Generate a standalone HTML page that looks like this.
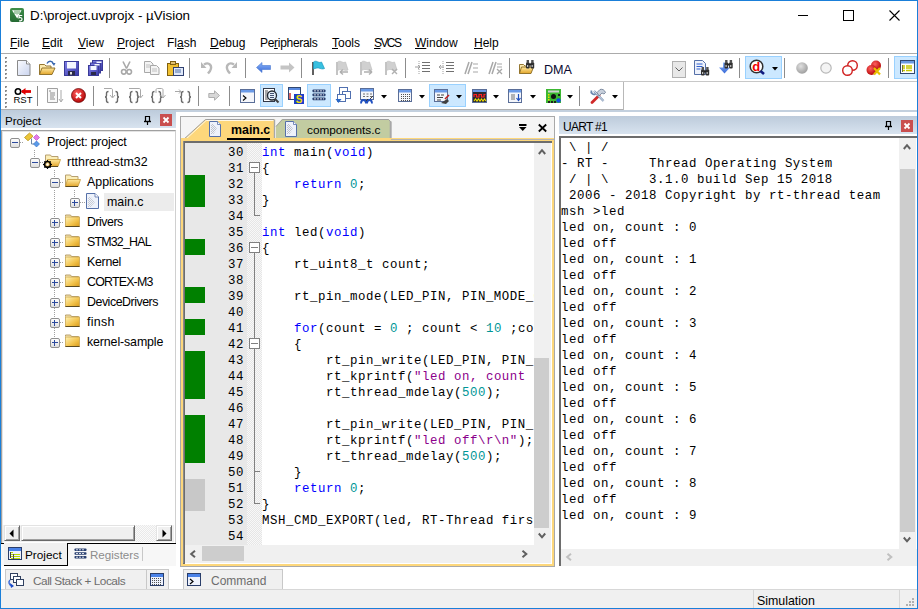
<!DOCTYPE html><html><head><meta charset="utf-8"><style>
*{margin:0;padding:0;box-sizing:border-box}
html,body{width:918px;height:609px;overflow:hidden;background:#fff;font-family:"Liberation Sans",sans-serif;font-size:12px;color:#000}
.ab{position:absolute}
.t{position:absolute;white-space:pre;line-height:14px}
.m{font-family:"Liberation Mono",monospace;font-size:12.4px;letter-spacing:0.56px;line-height:16px;white-space:pre;position:absolute}
.k{color:#0000ff}.n{color:#009696}.s{color:#8b008b}
.u{text-decoration:underline}
svg{position:absolute;overflow:visible}
</style></head><body>
<svg style="left:10px;top:8px" width="14" height="14" viewBox="0 0 14 14"><defs><linearGradient id="lg5" x1="0" y1="0" x2="0" y2="1"><stop offset="0" stop-color="#3f8f4a"/><stop offset="1" stop-color="#256a33"/></linearGradient></defs><rect x="0" y="0" width="14" height="14" rx="2" fill="url(#lg5)"/><path d="M2 2.2h9.5L7.2 10.5z" fill="#fff"/><path d="M5 2.5v3.5M7 2.5v4M9 2.5v3.5" stroke="#3a8a46" stroke-width="0.9"/><path d="M9 7.5h3.2M9.3 7.5l-0.3 2.3c1.5-0.5 3 0 3 1.4 0 1.3-1.3 2-2.9 1.5" fill="none" stroke="#fff" stroke-width="1.2"/></svg>
<div class="t" style="left:30px;top:9px;font-size:13.4px">D:\project.uvprojx - µVision</div>
<div class="t" style="left:10px;top:36px;letter-spacing:0"><span class="u">F</span>ile</div>
<div class="t" style="left:42px;top:36px;letter-spacing:0"><span class="u">E</span>dit</div>
<div class="t" style="left:78px;top:36px;letter-spacing:0"><span class="u">V</span>iew</div>
<div class="t" style="left:117px;top:36px;letter-spacing:0"><span class="u">P</span>roject</div>
<div class="t" style="left:167px;top:36px;letter-spacing:0">Fl<span class="u">a</span>sh</div>
<div class="t" style="left:210px;top:36px;letter-spacing:0"><span class="u">D</span>ebug</div>
<div class="t" style="left:260px;top:36px;letter-spacing:-0.3px">Pe<span class="u">r</span>ipherals</div>
<div class="t" style="left:332px;top:36px;letter-spacing:0"><span class="u">T</span>ools</div>
<div class="t" style="left:374px;top:36px;letter-spacing:-1.6px"><span class="u">S</span>VCS</div>
<div class="t" style="left:415px;top:36px;letter-spacing:0"><span class="u">W</span>indow</div>
<div class="t" style="left:474px;top:36px;letter-spacing:0"><span class="u">H</span>elp</div>
<div class="ab" style="left:798px;top:15px;width:10px;height:1px;background:#000"></div>
<div class="ab" style="left:843px;top:10px;width:11px;height:11px;border:1px solid #000"></div>
<svg style="left:889px;top:10px" width="11" height="11" viewBox="0 0 11 11"><path d="M0.5 0.5L10.5 10.5M10.5 0.5L0.5 10.5" stroke="#000" stroke-width="1.1"/></svg>
<div class="ab" style="left:1px;top:53px;width:916px;height:1px;background:#ababab"></div>
<div class="ab" style="left:1px;top:81px;width:916px;height:1px;background:#c8c8c8"></div>
<div class="ab" style="left:1px;top:109px;width:623px;height:1px;background:#b0b0b0"></div>
<div class="ab" style="left:5px;top:57px;width:2px;height:2px;background:#c4c4c4;box-shadow:inset 1px 1px 0 #8a8a8a"></div>
<div class="ab" style="left:5px;top:61px;width:2px;height:2px;background:#c4c4c4;box-shadow:inset 1px 1px 0 #8a8a8a"></div>
<div class="ab" style="left:5px;top:65px;width:2px;height:2px;background:#c4c4c4;box-shadow:inset 1px 1px 0 #8a8a8a"></div>
<div class="ab" style="left:5px;top:69px;width:2px;height:2px;background:#c4c4c4;box-shadow:inset 1px 1px 0 #8a8a8a"></div>
<div class="ab" style="left:5px;top:73px;width:2px;height:2px;background:#c4c4c4;box-shadow:inset 1px 1px 0 #8a8a8a"></div>
<div class="ab" style="left:5px;top:77px;width:2px;height:2px;background:#c4c4c4;box-shadow:inset 1px 1px 0 #8a8a8a"></div>
<div class="ab" style="left:5px;top:86px;width:2px;height:2px;background:#c4c4c4;box-shadow:inset 1px 1px 0 #8a8a8a"></div>
<div class="ab" style="left:5px;top:90px;width:2px;height:2px;background:#c4c4c4;box-shadow:inset 1px 1px 0 #8a8a8a"></div>
<div class="ab" style="left:5px;top:94px;width:2px;height:2px;background:#c4c4c4;box-shadow:inset 1px 1px 0 #8a8a8a"></div>
<div class="ab" style="left:5px;top:98px;width:2px;height:2px;background:#c4c4c4;box-shadow:inset 1px 1px 0 #8a8a8a"></div>
<div class="ab" style="left:5px;top:102px;width:2px;height:2px;background:#c4c4c4;box-shadow:inset 1px 1px 0 #8a8a8a"></div>
<div class="ab" style="left:5px;top:106px;width:2px;height:2px;background:#c4c4c4;box-shadow:inset 1px 1px 0 #8a8a8a"></div>
<svg width="0" height="0" style="position:absolute"><defs><linearGradient id="pg" x1="0" y1="0" x2="1" y2="1"><stop offset="0" stop-color="#fbfcff"/><stop offset="1" stop-color="#c9d3ee"/></linearGradient><linearGradient id="bl" x1="0" y1="0" x2="0" y2="1"><stop offset="0" stop-color="#8ab4f8"/><stop offset="1" stop-color="#3a6ad8"/></linearGradient><radialGradient id="rc" cx="0.4" cy="0.35" r="0.7"><stop offset="0" stop-color="#ff6060"/><stop offset="1" stop-color="#b00000"/></radialGradient><radialGradient id="gc" cx="0.4" cy="0.35" r="0.7"><stop offset="0" stop-color="#e0e0e0"/><stop offset="1" stop-color="#9a9a9a"/></radialGradient></defs></svg>
<svg style="left:17px;top:60px" width="14" height="16" viewBox="0 0 14 16"><path d="M0.5 0.5h9l3.5 3.5v11.5h-12.5z" fill="url(#pg)" stroke="#8a8a8a"/><path d="M9.5 0.5v3.5h3.5" fill="#fff" stroke="#8a8a8a"/></svg>
<svg style="left:39px;top:60px" width="17" height="16" viewBox="0 0 17 16"><path d="M0.5 14.5V4.5h5l1.5 1.5h5v2" fill="#fbeab0" stroke="#8a6a20" stroke-width="0.9"/><path d="M3 8h13l-3 6.5H0.5z" fill="url(#fg2)" stroke="#8a6a20" stroke-width="0.9"/><path d="M8 3.5c1.5-3 5-3 6.5 0.5" fill="none" stroke="#3a68b0" stroke-width="1.4"/><path d="M13 3h3.5l-1.5 3z" fill="#3a68b0"/></svg>
<svg width="0" height="0" style="position:absolute"><defs><linearGradient id="sv" x1="0" y1="0" x2="1" y2="1"><stop offset="0" stop-color="#8080e8"/><stop offset="1" stop-color="#3a3aa8"/></linearGradient></defs></svg>
<svg style="left:64px;top:61px" width="15" height="15" viewBox="0 0 15 15"><rect x="0.5" y="0.5" width="14" height="14" fill="url(#sv)" stroke="#3a3a98"/><rect x="3" y="1" width="9" height="6.5" fill="#f4f6ff"/><rect x="4" y="10" width="7" height="4.5" fill="#2a2a4a"/><rect x="6" y="11" width="2" height="2.5" fill="#e0e0e0"/></svg>
<svg style="left:88px;top:60px" width="15" height="16" viewBox="0 0 15 16"><rect x="4.5" y="0.5" width="10" height="10" fill="url(#sv)" stroke="#3a3a98"/><rect x="2.5" y="3" width="10" height="10" fill="url(#sv)" stroke="#3a3a98"/><rect x="0.5" y="5.5" width="10" height="10" fill="url(#sv)" stroke="#3a3a98"/><rect x="2.5" y="6" width="6" height="4" fill="#f4f6ff"/><rect x="3" y="12" width="5" height="3" fill="#2a2a4a"/><rect x="6.5" y="4" width="5" height="1.5" fill="#f4f6ff"/><rect x="8.5" y="1.5" width="5" height="1.5" fill="#f4f6ff"/></svg>
<div class="ab" style="left:109px;top:58px;width:1px;height:20px;background:#8c8c8c"></div>
<svg style="left:121px;top:61px" width="11" height="14" viewBox="0 0 11 14"><path d="M2 0.5l3.5 7M9 0.5l-3.5 7" stroke="#a8a8a8" stroke-width="1.6"/><circle cx="2.8" cy="10.8" r="2.3" fill="none" stroke="#a8a8a8" stroke-width="1.6"/><circle cx="8.2" cy="10.8" r="2.3" fill="none" stroke="#a8a8a8" stroke-width="1.6"/></svg>
<svg style="left:144px;top:61px" width="16" height="14" viewBox="0 0 16 14"><path d="M0.5 0.5h6l2.5 2.5v8.5h-8.5z" fill="#f4f4f4" stroke="#a8a8a8"/><path d="M6.5 4.5h6l2.5 2.5v6.5h-8.5z" fill="#f4f4f4" stroke="#a8a8a8"/><path d="M2 4h4M2 6h4M8 8h5M8 10h5" stroke="#c0c0c0"/></svg>
<svg style="left:167px;top:61px" width="17" height="15" viewBox="0 0 17 15"><rect x="0.5" y="2.5" width="11" height="12" fill="#f0c030" stroke="#806010"/><rect x="3.5" y="0.5" width="5" height="3" fill="#e0c070" stroke="#806010"/><rect x="6.5" y="6.5" width="10" height="8" fill="#dfe8f8" stroke="#304070"/><path d="M8 9h6M8 11h6" stroke="#5070a8"/></svg>
<div class="ab" style="left:189px;top:58px;width:1px;height:20px;background:#8c8c8c"></div>
<svg style="left:201px;top:61px" width="12" height="13" viewBox="0 0 12 13"><path d="M3 3.5c5-3 9 1 6 6.5l-2 2.5" fill="none" stroke="#b8b8b8" stroke-width="2.4"/><path d="M0 1v6h5.5z" fill="#b8b8b8"/></svg>
<svg style="left:225px;top:61px" width="12" height="13" viewBox="0 0 12 13"><path d="M9 3.5c-5-3-9 1-6 6.5l2 2.5" fill="none" stroke="#b8b8b8" stroke-width="2.4"/><path d="M12 1v6h-5.5z" fill="#b8b8b8"/></svg>
<div class="ab" style="left:245px;top:58px;width:1px;height:20px;background:#8c8c8c"></div>
<svg style="left:256px;top:62px" width="15" height="11" viewBox="0 0 15 11"><path d="M0.5 5.5L6 0.5v3h8.5v4H6v3z" fill="url(#bl)" stroke="#4a78d0" stroke-width="0.6"/></svg>
<svg style="left:280px;top:62px" width="15" height="11" viewBox="0 0 15 11"><path d="M14.5 5.5L9 0.5v3H0.5v4H9v3z" fill="#c4c4c4"/></svg>
<div class="ab" style="left:301px;top:58px;width:1px;height:20px;background:#8c8c8c"></div>
<svg style="left:311px;top:60px" width="15" height="16" viewBox="0 0 15 16"><path d="M2 2v13" stroke="#606060" stroke-width="2"/><path d="M2.5 2c2.5-2 4.5 0.5 6.5 0.5l1.5-0.5 3 6.5c-2 1-4 0-6-0.5-1.5-0.3-3.5 0.5-5 1z" fill="#38c0e0" stroke="#1898c0" stroke-width="0.7"/></svg>
<svg style="left:335px;top:60px" width="15" height="16" viewBox="0 0 15 16"><path d="M2 2v13" stroke="#c4c4c4" stroke-width="2"/><path d="M2.5 2c2.5-2 4.5 0.5 6.5 0.5l1.5-0.5 2.5 8c-2 1-4 0-6-0.5-1.5-0.3-3.5 0.5-4.5 1z" fill="#d0d0d0" stroke="#c0c0c0" stroke-width="0.7"/><path d="M5 12h8M5 12l3-2.5M5 12l3 2.5" stroke="#b0b0b0" stroke-width="1.5" fill="none"/></svg>
<svg style="left:359px;top:60px" width="15" height="16" viewBox="0 0 15 16"><path d="M2 2v13" stroke="#c4c4c4" stroke-width="2"/><path d="M2.5 2c2.5-2 4.5 0.5 6.5 0.5l1.5-0.5 2.5 8c-2 1-4 0-6-0.5-1.5-0.3-3.5 0.5-4.5 1z" fill="#d0d0d0" stroke="#c0c0c0" stroke-width="0.7"/><path d="M5 12h8M13 12l-3-2.5M13 12l-3 2.5" stroke="#b0b0b0" stroke-width="1.5" fill="none"/></svg>
<svg style="left:384px;top:60px" width="15" height="16" viewBox="0 0 15 16"><path d="M2 2v13" stroke="#c4c4c4" stroke-width="2"/><path d="M2.5 2c2.5-2 4.5 0.5 6.5 0.5l1.5-0.5 2.5 8c-2 1-4 0-6-0.5-1.5-0.3-3.5 0.5-4.5 1z" fill="#d0d0d0" stroke="#c0c0c0" stroke-width="0.7"/><path d="M8 9l5 5M13 9l-5 5" stroke="#b0b0b0" stroke-width="1.4"/></svg>
<div class="ab" style="left:405px;top:58px;width:1px;height:20px;background:#8c8c8c"></div>
<svg style="left:415px;top:60px" width="16" height="15" viewBox="0 0 16 15"><path d="M7 2.5h8M7 5.5h8M7 8.5h8M7 11.5h8" stroke="#707070" stroke-width="1.2"/><path d="M4 1v13" stroke="#a0a0a0" stroke-dasharray="1 1"/><path d="M0 7h5M3 5l2 2-2 2" stroke="#a0a0a0" fill="none"/></svg>
<svg style="left:439px;top:60px" width="16" height="15" viewBox="0 0 16 15"><path d="M7 2.5h8M7 5.5h8M7 8.5h8M7 11.5h8" stroke="#707070" stroke-width="1.2"/><path d="M4 1v13" stroke="#a0a0a0" stroke-dasharray="1 1"/><path d="M0 7h5M2 5L0 7l2 2" stroke="#a0a0a0" fill="none"/></svg>
<svg style="left:464px;top:61px" width="15" height="14" viewBox="0 0 15 14"><path d="M1 13L5 1M4 13L8 1" stroke="#a8a8a8" stroke-width="1.5"/><path d="M9 3h5M9 7h5M9 11h5" stroke="#a8a8a8" stroke-width="1.2"/></svg>
<svg style="left:488px;top:61px" width="15" height="14" viewBox="0 0 15 14"><path d="M1 13L5 1M4 13L8 1" stroke="#a8a8a8" stroke-width="1.5"/><path d="M9 3h5M9 6h5" stroke="#a8a8a8" stroke-width="1.2"/><path d="M9 8l5 5M14 8l-5 5" stroke="#a8a8a8" stroke-width="1.3"/></svg>
<div class="ab" style="left:509px;top:58px;width:1px;height:20px;background:#8c8c8c"></div>
<svg style="left:519px;top:60px" width="16" height="15" viewBox="0 0 16 15"><path d="M0.5 13.5V4.5h4l1.5 1.5h4" fill="#fbeab0" stroke="#8a6a20" stroke-width="0.9"/><path d="M2.5 7h12l-2.5 6.5H0.5z" fill="url(#fg2)" stroke="#8a6a20" stroke-width="0.9"/><g transform="translate(7,0)"><rect x="0" y="2.5" width="3.6" height="6" rx="1" fill="#303030"/><rect x="4.6" y="2.5" width="3.6" height="6" rx="1" fill="#303030"/><rect x="0.6" y="0" width="2.4" height="3" fill="#505050"/><rect x="5.2" y="0" width="2.4" height="3" fill="#505050"/><rect x="3" y="3.5" width="2.2" height="2" fill="#202020"/><rect x="1" y="5" width="1.2" height="2" fill="#c0c0c0"/><rect x="5.6" y="5" width="1.2" height="2" fill="#c0c0c0"/></g></svg>
<div class="t" style="left:544px;top:63px;font-size:12.6px;color:#0a0a30">DMA</div>
<div class="ab" style="left:672px;top:61px;width:14px;height:17px;background:#e8e8e8;border:1px solid #b0b0b0"></div>
<svg style="left:675px;top:67px" width="8" height="5" viewBox="0 0 8 5"><path d="M0.5 0.5l3.5 3.5 3.5-3.5" fill="none" stroke="#606060"/></svg>
<svg style="left:694px;top:60px" width="15" height="16" viewBox="0 0 15 16"><path d="M0.5 0.5h8l3 3v11h-11z" fill="#eef2fb" stroke="#5570a8"/><path d="M2.5 4h6M2.5 6.5h6M2.5 9h4" stroke="#3060d0" stroke-width="1.1"/><g transform="translate(7,7)"><rect x="0" y="2.5" width="3.6" height="6" rx="1" fill="#303030"/><rect x="4.6" y="2.5" width="3.6" height="6" rx="1" fill="#303030"/><rect x="0.6" y="0" width="2.4" height="3" fill="#505050"/><rect x="5.2" y="0" width="2.4" height="3" fill="#505050"/><rect x="3" y="3.5" width="2.2" height="2" fill="#202020"/><rect x="1" y="5" width="1.2" height="2" fill="#c0c0c0"/><rect x="5.6" y="5" width="1.2" height="2" fill="#c0c0c0"/></g></svg>
<svg style="left:717px;top:60px" width="16" height="16" viewBox="0 0 16 16"><path d="M2 7.5h4v-5h3v5h4l-5.5 6z" fill="url(#bl)"/><g transform="translate(7.5,0)"><rect x="0" y="2.5" width="3.6" height="6" rx="1" fill="#303030"/><rect x="4.6" y="2.5" width="3.6" height="6" rx="1" fill="#303030"/><rect x="0.6" y="0" width="2.4" height="3" fill="#505050"/><rect x="5.2" y="0" width="2.4" height="3" fill="#505050"/><rect x="3" y="3.5" width="2.2" height="2" fill="#202020"/><rect x="1" y="5" width="1.2" height="2" fill="#c0c0c0"/><rect x="5.6" y="5" width="1.2" height="2" fill="#c0c0c0"/></g></svg>
<div class="ab" style="left:739px;top:58px;width:1px;height:20px;background:#8c8c8c"></div>
<div class="ab" style="left:745px;top:56px;width:37px;height:23px;background:#cce8ff;border:1px solid #99d1ff"></div>
<svg style="left:749px;top:59px" width="19" height="18" viewBox="0 0 19 18"><circle cx="7.5" cy="7.5" r="6.3" fill="#fff" stroke="#303030" stroke-width="1.5"/><path d="M11.5 12l3.5 3" stroke="#101a80" stroke-width="2.6"/><text x="7.3" y="12" text-anchor="middle" font-family="Liberation Sans" font-weight="bold" font-size="13" fill="#f00000">d</text></svg>
<svg style="left:772px;top:67px" width="6" height="4" viewBox="0 0 6 4"><path d="M0 0h6l-3 3.5z" fill="#000"/></svg>
<div class="ab" style="left:784px;top:58px;width:1px;height:20px;background:#8c8c8c"></div>
<svg style="left:796px;top:62px" width="12" height="12" viewBox="0 0 12 12"><circle cx="6" cy="6" r="5.8" fill="url(#gc)"/></svg>
<svg style="left:820px;top:62px" width="12" height="12" viewBox="0 0 12 12"><circle cx="6" cy="6" r="5.2" fill="#f4f4f4" stroke="#b8b8b8" stroke-width="1.2"/></svg>
<svg style="left:842px;top:60px" width="16" height="16" viewBox="0 0 16 16"><circle cx="10.5" cy="5.5" r="4.8" fill="#fff" stroke="#d02020" stroke-width="1.4"/><circle cx="5.5" cy="10.5" r="4.8" fill="#fff" stroke="#d02020" stroke-width="1.4"/></svg>
<svg style="left:866px;top:60px" width="16" height="16" viewBox="0 0 16 16"><circle cx="10" cy="5.5" r="5" fill="url(#rc)"/><circle cx="5.5" cy="10" r="5" fill="url(#rc)"/><path d="M8 8l6 6.5M14 8l-6 6.5" stroke="#e8c000" stroke-width="2.2"/></svg>
<div class="ab" style="left:888px;top:58px;width:1px;height:20px;background:#8c8c8c"></div>
<div class="ab" style="left:894px;top:56px;width:23px;height:23px;background:#cce8ff;border:1px solid #99d1ff"></div>
<svg style="left:900px;top:60px" width="15" height="14" viewBox="0 0 15 14"><rect x="0.5" y="0.5" width="14" height="13" fill="#fff" stroke="#304870"/><rect x="1" y="1" width="13" height="2.5" fill="#6a9ae0"/><path d="M3 6h2M3 8h2M3 10.5h2M6 6h6M6 8h6M6 10.5h6" stroke="#c8c800" stroke-width="1.3"/><path d="M2.5 5v7" stroke="#505000" stroke-width="0.8"/></svg>
<div class="ab" style="left:623px;top:82px;width:1px;height:28px;background:#b8b8b8"></div>
<svg style="left:14px;top:88px" width="18" height="16" viewBox="0 0 18 16"><circle cx="4" cy="3.5" r="2.7" fill="#fff" stroke="#000" stroke-width="1.6"/><path d="M8 3.5h9" stroke="#e00000" stroke-width="2.8"/><path d="M7 3.5l4.5-3.5v7z" fill="#e00000"/><text x="9" y="15" text-anchor="middle" font-family="Liberation Sans" font-size="9.5" fill="#000">RST</text></svg>
<div class="ab" style="left:37px;top:86px;width:1px;height:20px;background:#8c8c8c"></div>
<svg style="left:47px;top:88px" width="17" height="16" viewBox="0 0 17 16"><path d="M0.5 0.5h10v14h-10z" fill="#f8f8f8" stroke="#a0a0a0"/><path d="M2 3h2M3 5h5M3 7h5M3 9h4M3 11h5" stroke="#707070" stroke-width="0.8"/><path d="M14 2v11M12 11l2 3 2-3" stroke="#a8a8a8" fill="none"/></svg>
<svg style="left:71px;top:88px" width="16" height="16" viewBox="0 0 16 16"><circle cx="7.5" cy="7.5" r="7" fill="url(#rc)" stroke="#600000" stroke-width="0.7"/><path d="M5 5l5 5M10 5l-5 5" stroke="#fff" stroke-width="2"/></svg>
<div class="ab" style="left:93px;top:86px;width:1px;height:20px;background:#8c8c8c"></div>
<svg style="left:104px;top:88px" width="16" height="16" viewBox="0 0 16 16"><g transform="translate(0,3)"><path d="M4.5 0.5c-1.5 0-2 0.7-2 2v2c0 1-0.5 1.5-1.5 1.5c1 0 1.5 0.5 1.5 1.5v2c0 1.3 0.5 2 2 2M11.5 0.5c1.5 0 2 0.7 2 2v2c0 1 0.5 1.5 1.5 1.5c-1 0-1.5 0.5-1.5 1.5v2c0 1.3-0.5 2-2 2" fill="none" stroke="#6a6a6a" stroke-width="1.4"/></g><path d="M0 0.5h7c1 0 1.5 0.5 1.5 1.5v7" fill="none" stroke="#a8a8a8"/><path d="M6 7l2.5 3 2.5-3" fill="none" stroke="#a8a8a8"/></svg>
<svg style="left:128px;top:88px" width="16" height="16" viewBox="0 0 16 16"><g transform="translate(0,3)"><path d="M4.5 0.5c-1.5 0-2 0.7-2 2v2c0 1-0.5 1.5-1.5 1.5c1 0 1.5 0.5 1.5 1.5v2c0 1.3 0.5 2 2 2M7.5 0.5c1.5 0 2 0.7 2 2v2c0 1 0.5 1.5 1.5 1.5c-1 0-1.5 0.5-1.5 1.5v2c0 1.3-0.5 2-2 2" fill="none" stroke="#6a6a6a" stroke-width="1.4"/></g><path d="M1 0.5h10c1 0 1.5 0.5 1.5 1.5v7" fill="none" stroke="#a8a8a8"/><path d="M10 7l2.5 3 2.5-3" fill="none" stroke="#a8a8a8"/></svg>
<svg style="left:151px;top:88px" width="16" height="16" viewBox="0 0 16 16"><g transform="translate(0,3)"><path d="M3.5 0.5c-1.5 0-2 0.7-2 2v2c0 1-0.5 1.5-1.5 1.5c1 0 1.5 0.5 1.5 1.5v2c0 1.3 0.5 2 2 2M7.5 0.5c1.5 0 2 0.7 2 2v2c0 1 0.5 1.5 1.5 1.5c-1 0-1.5 0.5-1.5 1.5v2c0 1.3-0.5 2-2 2" fill="none" stroke="#6a6a6a" stroke-width="1.4"/></g><path d="M5 5v-3c0-1 0.5-1.5 1.5-1.5h4c1 0 1.5 0.5 1.5 1.5v7" fill="none" stroke="#a8a8a8"/><path d="M9.5 7l2.5 3 2.5-3" fill="none" stroke="#a8a8a8"/></svg>
<svg style="left:175px;top:88px" width="16" height="16" viewBox="0 0 16 16"><g transform="translate(0,3)"><path d="M8.5 0.5c-1.5 0-2 0.7-2 2v2c0 1-0.5 1.5-1.5 1.5c1 0 1.5 0.5 1.5 1.5v2c0 1.3 0.5 2 2 2M12.5 0.5c1.5 0 2 0.7 2 2v2c0 1 0.5 1.5 1.5 1.5c-1 0-1.5 0.5-1.5 1.5v2c0 1.3-0.5 2-2 2" fill="none" stroke="#6a6a6a" stroke-width="1.4"/></g><path d="M0 3.5h6M4 1.5l2 2-2 2" fill="none" stroke="#a8a8a8"/></svg>
<div class="ab" style="left:198px;top:86px;width:1px;height:20px;background:#8c8c8c"></div>
<svg style="left:208px;top:90px" width="12" height="11" viewBox="0 0 12 11"><path d="M11.5 5.5L6.5 0.8v2.7H0.8v4h5.7v2.7z" fill="#d8d8d8" stroke="#a8a8a8" stroke-width="0.9"/></svg>
<div class="ab" style="left:229px;top:86px;width:1px;height:20px;background:#8c8c8c"></div>
<svg style="left:240px;top:89px" width="15" height="14" viewBox="0 0 15 14"><rect x="0.5" y="0.5" width="14" height="13" fill="#f4f6fb" stroke="#5a6e98"/><rect x="1" y="1" width="13" height="2.5" fill="#6a9ae8"/><path d="M3 6.5l3 2.5-3 2.5" fill="none" stroke="#000" stroke-width="1.1"/></svg>
<div class="ab" style="left:260px;top:84px;width:23px;height:23px;background:#cce8ff;border:1px solid #99d1ff"></div>
<svg style="left:263px;top:88px" width="17" height="16" viewBox="0 0 17 16"><rect x="0.5" y="0.5" width="11" height="13" fill="#fff" stroke="#303848"/><path d="M2 3h3M2 5h3M2 7h3M2 9h3M2 11h3" stroke="#404040" stroke-width="0.9"/><circle cx="9" cy="7.5" r="4.5" fill="#e4f0fa" stroke="#202830" stroke-width="1.3"/><path d="M7 5.5h4M7 7.5h4M7 9.5h4" stroke="#304060" stroke-width="0.9"/><path d="M12 11l3.5 3.5" stroke="#404040" stroke-width="2"/></svg>
<svg style="left:288px;top:87px" width="16" height="17" viewBox="0 0 16 17"><rect x="0.5" y="0.5" width="12" height="12" fill="#fff" stroke="#304870"/><rect x="1" y="1" width="11" height="2" fill="#5a8ae0"/><rect x="6" y="7" width="10" height="10" fill="#1e3ec8"/><text x="11" y="16" text-anchor="middle" font-family="Liberation Sans" font-weight="bold" font-size="10" fill="#f0e000">S</text><path d="M2 6v6" stroke="#c00000" stroke-width="1.2"/></svg>
<div class="ab" style="left:307px;top:84px;width:24px;height:23px;background:#cce8ff;border:1px solid #99d1ff"></div>
<svg style="left:312px;top:89px" width="14" height="12" viewBox="0 0 14 12"><rect x="0.5" y="0.5" width="13" height="2.8" rx="0.8" fill="#2a4070"/><rect x="0.5" y="4.5" width="13" height="2.8" rx="0.8" fill="#2a4070"/><rect x="0.5" y="8.5" width="13" height="2.8" rx="0.8" fill="#2a4070"/><path d="M2 1.9h10M2 5.9h10M2 9.9h10" stroke="#d8dce8" stroke-dasharray="2 1"/></svg>
<svg style="left:335px;top:87px" width="17" height="17" viewBox="0 0 17 17"><rect x="4.5" y="0.5" width="8" height="7" fill="#fff" stroke="#5070b0"/><rect x="7.5" y="4.5" width="8" height="7" fill="#fff" stroke="#5070b0"/><rect x="2.5" y="7.5" width="8" height="7" fill="#fff" stroke="#5070b0"/><path d="M0.5 12l3 4 3-4z" fill="#2a68c8"/></svg>
<svg style="left:360px;top:88px" width="16" height="16" viewBox="0 0 16 16"><rect x="0.5" y="0.5" width="13" height="11" fill="#f4f6fb" stroke="#5a6e98"/><rect x="1" y="1" width="12" height="2.5" fill="#6a9ae8"/><path d="M3 6h2M6.5 6h2M10 6h2M3 8.5h2M6.5 8.5h2M10 8.5h2" stroke="#707070"/><path d="M1 15.5c0-2.5 1-3.5 2.5-3.5s2.5 1 2.5 3.5M7 15.5c0-2.5 1-3.5 2.5-3.5s2.5 1 2.5 3.5" fill="none" stroke="#2050c0" stroke-width="1.8"/><path d="M6 13l2-2M10 11l3-3" stroke="#303030" stroke-width="0.9"/></svg>
<svg style="left:381px;top:95px" width="6" height="4" viewBox="0 0 6 4"><path d="M0 0h6l-3 3.5z" fill="#000"/></svg>
<svg style="left:398px;top:89px" width="14" height="13" viewBox="0 0 14 13"><rect x="0.5" y="0.5" width="13" height="12" fill="#f4f6fb" stroke="#5a6e98"/><rect x="1" y="1" width="12" height="2.5" fill="#6a9ae8"/><rect x="3" y="5" width="1" height="1" fill="#505050"/><rect x="5" y="5" width="1" height="1" fill="#505050"/><rect x="7" y="5" width="1" height="1" fill="#505050"/><rect x="9" y="5" width="1" height="1" fill="#505050"/><rect x="11" y="5" width="1" height="1" fill="#505050"/><rect x="3" y="7" width="1" height="1" fill="#505050"/><rect x="5" y="7" width="1" height="1" fill="#505050"/><rect x="7" y="7" width="1" height="1" fill="#505050"/><rect x="9" y="7" width="1" height="1" fill="#505050"/><rect x="11" y="7" width="1" height="1" fill="#505050"/><rect x="3" y="9" width="1" height="1" fill="#505050"/><rect x="5" y="9" width="1" height="1" fill="#505050"/><rect x="7" y="9" width="1" height="1" fill="#505050"/><rect x="9" y="9" width="1" height="1" fill="#505050"/><rect x="11" y="9" width="1" height="1" fill="#505050"/><rect x="3" y="11" width="1" height="1" fill="#505050"/><rect x="5" y="11" width="1" height="1" fill="#505050"/><rect x="7" y="11" width="1" height="1" fill="#505050"/><rect x="9" y="11" width="1" height="1" fill="#505050"/><rect x="11" y="11" width="1" height="1" fill="#505050"/></svg>
<svg style="left:419px;top:95px" width="6" height="4" viewBox="0 0 6 4"><path d="M0 0h6l-3 3.5z" fill="#000"/></svg>
<div class="ab" style="left:429px;top:84px;width:37px;height:23px;background:#cce8ff;border:1px solid #99d1ff"></div>
<svg style="left:434px;top:89px" width="16" height="15" viewBox="0 0 16 15"><rect x="0.5" y="0.5" width="13" height="12" fill="#f4f6fb" stroke="#5a6e98"/><rect x="1" y="1" width="12" height="2.5" fill="#6a9ae8"/><path d="M3 6h3M7 6h3M3 8.5h6M3 11h4" stroke="#404040" stroke-width="1.1"/><path d="M7 14l6-4 2 2-3 3z" fill="#404040"/><path d="M11 10l4-4" stroke="#c02020" stroke-width="1.6"/></svg>
<svg style="left:456px;top:95px" width="6" height="4" viewBox="0 0 6 4"><path d="M0 0h6l-3 3.5z" fill="#000"/></svg>
<svg style="left:472px;top:89px" width="15" height="14" viewBox="0 0 15 14"><rect x="0.5" y="0.5" width="14" height="13" fill="#2a2a30" stroke="#5a6e98"/><rect x="1" y="1" width="13" height="2" fill="#6a9ae8"/><path d="M2 8V5.5h2.5V8H7V5.5h2.5V8H12V5.5h1.5" fill="none" stroke="#ff2020" stroke-width="1.2"/><path d="M2 12l1.5-2 1.5 2 1.5-2 1.5 2 1.5-2 1.5 2 1.5-2 1.5 2" fill="none" stroke="#f0e000" stroke-width="1.1"/></svg>
<svg style="left:493px;top:95px" width="6" height="4" viewBox="0 0 6 4"><path d="M0 0h6l-3 3.5z" fill="#000"/></svg>
<svg style="left:508px;top:89px" width="14" height="14" viewBox="0 0 14 14"><rect x="0.5" y="0.5" width="13" height="13" fill="#f4f6fb" stroke="#5a6e98"/><rect x="1" y="1" width="12" height="2.5" fill="#6a9ae8"/><path d="M3 6h4M3 8h4M3 10h4" stroke="#707070"/><path d="M10.5 5v6M8.5 9l2 2.5 2-2.5" stroke="#2050c0" fill="none" stroke-width="1.2"/></svg>
<svg style="left:530px;top:95px" width="6" height="4" viewBox="0 0 6 4"><path d="M0 0h6l-3 3.5z" fill="#000"/></svg>
<svg style="left:546px;top:89px" width="15" height="14" viewBox="0 0 15 14"><rect x="0" y="0" width="15" height="14" fill="#3cb832"/><rect x="2" y="1.5" width="11" height="2" fill="#d0d0d0"/><circle cx="7.5" cy="7.5" r="2.5" fill="#101010"/><rect x="2" y="5" width="1.5" height="1.5" fill="#f0e000"/><rect x="2" y="7.5" width="1.5" height="1.5" fill="#f0e000"/><rect x="2" y="10" width="1.5" height="1.5" fill="#f0e000"/><rect x="2" y="12" width="2" height="2" fill="#202020"/><rect x="5" y="12" width="2" height="2" fill="#202020"/><rect x="8" y="12" width="2" height="2" fill="#202020"/><rect x="12" y="5" width="2" height="2" fill="#202020"/><circle cx="12.5" cy="11.5" r="2.2" fill="#1050e0"/></svg>
<svg style="left:567px;top:95px" width="6" height="4" viewBox="0 0 6 4"><path d="M0 0h6l-3 3.5z" fill="#000"/></svg>
<div class="ab" style="left:579px;top:86px;width:1px;height:20px;background:#8c8c8c"></div>
<svg style="left:590px;top:88px" width="16" height="16" viewBox="0 0 16 16"><path d="M2 14.5l7-7" stroke="#d02828" stroke-width="2.8" stroke-linecap="round"/><path d="M4 3l9.5 10" stroke="#8098b8" stroke-width="2.2"/><path d="M4 3l9.5 10" stroke="#fff" stroke-width="0.7"/><path d="M1.5 2.5a2.8 2.8 0 0 0 4 3.5" fill="none" stroke="#6a88b0" stroke-width="1.8"/><path d="M7 4.5l3-3c2.5-0.8 4.5 0.5 5.5 3l-1.5 1.5-2-1-3 3z" fill="#c8d0dc" stroke="#687890" stroke-width="0.8"/></svg>
<svg style="left:612px;top:95px" width="6" height="4" viewBox="0 0 6 4"><path d="M0 0h6l-3 3.5z" fill="#000"/></svg>
<div class="ab" style="left:1px;top:110px;width:916px;height:455px;background:#fff"></div>
<div class="ab" style="left:176px;top:110px;width:741px;height:2px;background:#c3d0de"></div>
<div class="ab" style="left:1px;top:110px;width:175px;height:18px;background:linear-gradient(#bdcbdb,#d8e3ef)"></div>
<div class="t" style="left:5px;top:114px;font-size:11.6px">Project</div>
<svg style="left:143px;top:115px" width="9" height="10" viewBox="0 0 9 10"><path d="M2.5 1.5h4v5h-4z" fill="none" stroke="#000" stroke-width="1.2"/><path d="M1 6.5h7" stroke="#000" stroke-width="1.4"/><path d="M4.5 7v3" stroke="#000" stroke-width="1.2"/></svg>
<div class="ab" style="left:160px;top:114px;width:12px;height:12px;background:#c94f4f"></div>
<svg style="left:160px;top:114px" width="12" height="12" viewBox="0 0 12 12"><path d="M3.5 3.5l5 5M8.5 3.5l-5 5" stroke="#fff" stroke-width="1.8"/></svg>
<div class="ab" style="left:1px;top:130px;width:175px;height:413px;border-left:1px solid #a0a0a0;border-top:1px solid #a0a0a0;border-right:1px solid #d0d0d0;background:#fff"></div>
<div class="ab" style="left:2px;top:131px;width:1px;height:412px;background:#e3e3e3"></div>
<div class="ab" style="left:2px;top:131px;width:173px;height:1px;background:#e3e3e3"></div>
<svg width="0" height="0" style="position:absolute"><defs><linearGradient id="eg" x1="0" y1="0" x2="0" y2="1"><stop offset="0" stop-color="#fff"/><stop offset="1" stop-color="#dcdcdc"/></linearGradient><linearGradient id="fg" x1="0" y1="0" x2="1" y2="1"><stop offset="0" stop-color="#fff3b8"/><stop offset="0.6" stop-color="#f2c24a"/><stop offset="1" stop-color="#d89a1a"/></linearGradient><linearGradient id="fg2" x1="0" y1="0" x2="0" y2="1"><stop offset="0" stop-color="#ffe9a0"/><stop offset="1" stop-color="#e2a52a"/></linearGradient></defs></svg>
<svg style="left:10px;top:138px" width="10" height="10" viewBox="0 0 10 10"><rect x="0.5" y="0.5" width="9" height="9" rx="1.5" fill="url(#eg)" stroke="#8f8f8f"/><path d="M2 4.5h6" stroke="#2c4a9e" stroke-width="1"/></svg>
<div class="ab" style="left:20px;top:142px;width:4px;height:1px;background:repeating-linear-gradient(90deg,#a0a0a0 0 1px,transparent 1px 2px)"></div>
<svg style="left:24px;top:132px" width="16" height="17" viewBox="0 0 16 17"><path d="M7.5 6.5v5.5h3" fill="none" stroke="#6a86a8" stroke-width="1"/><path d="M0.5 5.5l5-4.5 3.5 3.2-5 4.5z" fill="#ecc63a" stroke="#b89418" stroke-width="0.8"/><path d="M9.5 5.5l3-3 3 3-3 3z" fill="#e47ae8" stroke="#b040c0" stroke-width="0.6"/><path d="M9.5 12l3-3 3 3-3 3z" fill="#5a9ae8" stroke="#2a6ac8" stroke-width="0.6"/></svg>
<div class="t" style="left:47px;top:135px;font-size:12.4px;letter-spacing:-0.2px">Project: project</div>
<div class="ab" style="left:34px;top:150px;width:1px;height:8px;background:repeating-linear-gradient(#a0a0a0 0 1px,transparent 1px 2px)"></div>
<svg style="left:30px;top:158px" width="10" height="10" viewBox="0 0 10 10"><rect x="0.5" y="0.5" width="9" height="9" rx="1.5" fill="url(#eg)" stroke="#8f8f8f"/><path d="M2 4.5h6" stroke="#2c4a9e" stroke-width="1"/></svg>
<div class="ab" style="left:40px;top:162px;width:4px;height:1px;background:repeating-linear-gradient(90deg,#a0a0a0 0 1px,transparent 1px 2px)"></div>
<svg style="left:45px;top:154px" width="16" height="13" viewBox="0 0 16 13"><path d="M0.5 12V1h5l1 1.5h6.5V5" fill="#fbeeb8" stroke="#b8a070"/><path d="M2.5 5.5h13l-2.5 7H0.5z" fill="url(#fg2)" stroke="#c79a38" stroke-width="0.8"/><path d="M0.5 12.5h12.5" stroke="#5b4a20"/></svg>
<svg style="left:43px;top:160px" width="9" height="9" viewBox="0 0 9 9"><circle cx="4.5" cy="4.5" r="3" fill="none" stroke="#000" stroke-width="1.6"/><path d="M4.5 0v9M0 4.5h9M1.3 1.3l6.4 6.4M7.7 1.3l-6.4 6.4" stroke="#000" stroke-width="1" stroke-dasharray="1.5 6 1.5 0"/><circle cx="4.5" cy="4.5" r="1.2" fill="#fff"/></svg>
<div class="t" style="left:67px;top:155px;font-size:12.4px">rtthread-stm32</div>
<div class="ab" style="left:54px;top:170px;width:1px;height:8px;background:repeating-linear-gradient(#a0a0a0 0 1px,transparent 1px 2px)"></div>
<svg style="left:50px;top:178px" width="10" height="10" viewBox="0 0 10 10"><rect x="0.5" y="0.5" width="9" height="9" rx="1.5" fill="url(#eg)" stroke="#8f8f8f"/><path d="M2 4.5h6" stroke="#2c4a9e" stroke-width="1"/></svg>
<div class="ab" style="left:60px;top:182px;width:4px;height:1px;background:repeating-linear-gradient(90deg,#a0a0a0 0 1px,transparent 1px 2px)"></div>
<svg style="left:65px;top:174px" width="16" height="13" viewBox="0 0 16 13"><path d="M0.5 12V1h5l1 1.5h6.5V5" fill="#fbeeb8" stroke="#b8a070"/><path d="M2.5 5.5h13l-2.5 7H0.5z" fill="url(#fg2)" stroke="#c79a38" stroke-width="0.8"/><path d="M0.5 12.5h12.5" stroke="#5b4a20"/></svg>
<div class="t" style="left:87px;top:175px;font-size:12.4px">Applications</div>
<div class="ab" style="left:104px;top:193px;width:70px;height:18px;background:#ececec"></div>
<div class="ab" style="left:74px;top:190px;width:1px;height:8px;background:repeating-linear-gradient(#a0a0a0 0 1px,transparent 1px 2px)"></div>
<svg style="left:70px;top:198px" width="10" height="10" viewBox="0 0 10 10"><rect x="0.5" y="0.5" width="9" height="9" rx="1.5" fill="url(#eg)" stroke="#8f8f8f"/><path d="M2 4.5h6" stroke="#2c4a9e" stroke-width="1"/><path d="M4.5 2v6" stroke="#2c4a9e" stroke-width="1"/></svg>
<div class="ab" style="left:80px;top:202px;width:6px;height:1px;background:repeating-linear-gradient(90deg,#a0a0a0 0 1px,transparent 1px 2px)"></div>
<svg style="left:86px;top:193px" width="13" height="16" viewBox="0 0 13 16"><path d="M0.5 0.5h8.5l3.5 3.5v11.5h-12z" fill="#eef2fb" stroke="#5570a8" stroke-width="1"/><path d="M9 0.5v3.5h3.5" fill="#fff" stroke="#5570a8" stroke-width="0.8"/></svg>
<div class="ab" style="left:88px;top:197px;width:7px;height:10px;background-image:repeating-conic-gradient(#c8ccd4 0 25%,#eef2fb 0 50%);background-size:2px 2px;clip-path:polygon(0 0,40% 0,100% 50%,40% 100%,0 100%)"></div>
<div class="t" style="left:107px;top:195px;font-size:12.4px">main.c</div>
<div class="ab" style="left:54px;top:190px;width:1px;height:152px;background:repeating-linear-gradient(#a0a0a0 0 1px,transparent 1px 2px)"></div>
<svg style="left:50px;top:218px" width="10" height="10" viewBox="0 0 10 10"><rect x="0.5" y="0.5" width="9" height="9" rx="1.5" fill="url(#eg)" stroke="#8f8f8f"/><path d="M2 4.5h6" stroke="#2c4a9e" stroke-width="1"/><path d="M4.5 2v6" stroke="#2c4a9e" stroke-width="1"/></svg>
<div class="ab" style="left:60px;top:222px;width:4px;height:1px;background:repeating-linear-gradient(90deg,#a0a0a0 0 1px,transparent 1px 2px)"></div>
<svg style="left:65px;top:214px" width="16" height="13" viewBox="0 0 16 13"><path d="M0.5 2.5v-1.5h5l1 1.5h7v1" fill="#f7e3a0" stroke="#b8a070"/><rect x="0.5" y="3" width="14" height="9.5" fill="url(#fg)" stroke="#c9a552" stroke-width="0.8"/><path d="M0.5 12.5h14" stroke="#5b4a20" stroke-width="1"/></svg>
<div class="t" style="left:87px;top:215px;font-size:12.4px;letter-spacing:-0.5px">Drivers</div>
<svg style="left:50px;top:238px" width="10" height="10" viewBox="0 0 10 10"><rect x="0.5" y="0.5" width="9" height="9" rx="1.5" fill="url(#eg)" stroke="#8f8f8f"/><path d="M2 4.5h6" stroke="#2c4a9e" stroke-width="1"/><path d="M4.5 2v6" stroke="#2c4a9e" stroke-width="1"/></svg>
<div class="ab" style="left:60px;top:242px;width:4px;height:1px;background:repeating-linear-gradient(90deg,#a0a0a0 0 1px,transparent 1px 2px)"></div>
<svg style="left:65px;top:234px" width="16" height="13" viewBox="0 0 16 13"><path d="M0.5 2.5v-1.5h5l1 1.5h7v1" fill="#f7e3a0" stroke="#b8a070"/><rect x="0.5" y="3" width="14" height="9.5" fill="url(#fg)" stroke="#c9a552" stroke-width="0.8"/><path d="M0.5 12.5h14" stroke="#5b4a20" stroke-width="1"/></svg>
<div class="t" style="left:87px;top:235px;font-size:12.4px;letter-spacing:-0.8px">STM32_HAL</div>
<svg style="left:50px;top:258px" width="10" height="10" viewBox="0 0 10 10"><rect x="0.5" y="0.5" width="9" height="9" rx="1.5" fill="url(#eg)" stroke="#8f8f8f"/><path d="M2 4.5h6" stroke="#2c4a9e" stroke-width="1"/><path d="M4.5 2v6" stroke="#2c4a9e" stroke-width="1"/></svg>
<div class="ab" style="left:60px;top:262px;width:4px;height:1px;background:repeating-linear-gradient(90deg,#a0a0a0 0 1px,transparent 1px 2px)"></div>
<svg style="left:65px;top:254px" width="16" height="13" viewBox="0 0 16 13"><path d="M0.5 2.5v-1.5h5l1 1.5h7v1" fill="#f7e3a0" stroke="#b8a070"/><rect x="0.5" y="3" width="14" height="9.5" fill="url(#fg)" stroke="#c9a552" stroke-width="0.8"/><path d="M0.5 12.5h14" stroke="#5b4a20" stroke-width="1"/></svg>
<div class="t" style="left:87px;top:255px;font-size:12.4px;letter-spacing:-0.3px">Kernel</div>
<svg style="left:50px;top:278px" width="10" height="10" viewBox="0 0 10 10"><rect x="0.5" y="0.5" width="9" height="9" rx="1.5" fill="url(#eg)" stroke="#8f8f8f"/><path d="M2 4.5h6" stroke="#2c4a9e" stroke-width="1"/><path d="M4.5 2v6" stroke="#2c4a9e" stroke-width="1"/></svg>
<div class="ab" style="left:60px;top:282px;width:4px;height:1px;background:repeating-linear-gradient(90deg,#a0a0a0 0 1px,transparent 1px 2px)"></div>
<svg style="left:65px;top:274px" width="16" height="13" viewBox="0 0 16 13"><path d="M0.5 2.5v-1.5h5l1 1.5h7v1" fill="#f7e3a0" stroke="#b8a070"/><rect x="0.5" y="3" width="14" height="9.5" fill="url(#fg)" stroke="#c9a552" stroke-width="0.8"/><path d="M0.5 12.5h14" stroke="#5b4a20" stroke-width="1"/></svg>
<div class="t" style="left:87px;top:275px;font-size:12.4px;letter-spacing:-0.8px">CORTEX-M3</div>
<svg style="left:50px;top:298px" width="10" height="10" viewBox="0 0 10 10"><rect x="0.5" y="0.5" width="9" height="9" rx="1.5" fill="url(#eg)" stroke="#8f8f8f"/><path d="M2 4.5h6" stroke="#2c4a9e" stroke-width="1"/><path d="M4.5 2v6" stroke="#2c4a9e" stroke-width="1"/></svg>
<div class="ab" style="left:60px;top:302px;width:4px;height:1px;background:repeating-linear-gradient(90deg,#a0a0a0 0 1px,transparent 1px 2px)"></div>
<svg style="left:65px;top:294px" width="16" height="13" viewBox="0 0 16 13"><path d="M0.5 2.5v-1.5h5l1 1.5h7v1" fill="#f7e3a0" stroke="#b8a070"/><rect x="0.5" y="3" width="14" height="9.5" fill="url(#fg)" stroke="#c9a552" stroke-width="0.8"/><path d="M0.5 12.5h14" stroke="#5b4a20" stroke-width="1"/></svg>
<div class="t" style="left:87px;top:295px;font-size:12.4px;letter-spacing:-0.47px">DeviceDrivers</div>
<svg style="left:50px;top:318px" width="10" height="10" viewBox="0 0 10 10"><rect x="0.5" y="0.5" width="9" height="9" rx="1.5" fill="url(#eg)" stroke="#8f8f8f"/><path d="M2 4.5h6" stroke="#2c4a9e" stroke-width="1"/><path d="M4.5 2v6" stroke="#2c4a9e" stroke-width="1"/></svg>
<div class="ab" style="left:60px;top:322px;width:4px;height:1px;background:repeating-linear-gradient(90deg,#a0a0a0 0 1px,transparent 1px 2px)"></div>
<svg style="left:65px;top:314px" width="16" height="13" viewBox="0 0 16 13"><path d="M0.5 2.5v-1.5h5l1 1.5h7v1" fill="#f7e3a0" stroke="#b8a070"/><rect x="0.5" y="3" width="14" height="9.5" fill="url(#fg)" stroke="#c9a552" stroke-width="0.8"/><path d="M0.5 12.5h14" stroke="#5b4a20" stroke-width="1"/></svg>
<div class="t" style="left:87px;top:315px;font-size:12.4px;letter-spacing:0.3px">finsh</div>
<svg style="left:50px;top:338px" width="10" height="10" viewBox="0 0 10 10"><rect x="0.5" y="0.5" width="9" height="9" rx="1.5" fill="url(#eg)" stroke="#8f8f8f"/><path d="M2 4.5h6" stroke="#2c4a9e" stroke-width="1"/><path d="M4.5 2v6" stroke="#2c4a9e" stroke-width="1"/></svg>
<div class="ab" style="left:60px;top:342px;width:4px;height:1px;background:repeating-linear-gradient(90deg,#a0a0a0 0 1px,transparent 1px 2px)"></div>
<svg style="left:65px;top:334px" width="16" height="13" viewBox="0 0 16 13"><path d="M0.5 2.5v-1.5h5l1 1.5h7v1" fill="#f7e3a0" stroke="#b8a070"/><rect x="0.5" y="3" width="14" height="9.5" fill="url(#fg)" stroke="#c9a552" stroke-width="0.8"/><path d="M0.5 12.5h14" stroke="#5b4a20" stroke-width="1"/></svg>
<div class="t" style="left:87px;top:335px;font-size:12.4px;letter-spacing:-0.12px">kernel-sample</div>
<div class="ab" style="left:3px;top:525px;width:171px;height:17px;background:#f0f0f0"></div>
<div class="ab" style="left:135px;top:525px;width:21px;height:17px;background-image:repeating-conic-gradient(#e9e9e9 0 25%,#fafafa 0 50%);background-size:2px 2px"></div>
<div class="ab" style="left:4px;top:525px;width:16px;height:16px;background:#f0f0f0;border-right:1px solid #696969;border-bottom:1px solid #696969;border-left:1px solid #e3e3e3;border-top:1px solid #e3e3e3;box-shadow:inset 1px 1px 0 #fff,inset -1px -1px 0 #a0a0a0"></div>
<div class="ab" style="left:21px;top:525px;width:114px;height:16px;background:#f0f0f0;border-right:1px solid #696969;border-bottom:1px solid #696969;border-left:1px solid #e3e3e3;border-top:1px solid #e3e3e3;box-shadow:inset 1px 1px 0 #fff,inset -1px -1px 0 #a0a0a0"></div>
<div class="ab" style="left:156px;top:525px;width:16px;height:16px;background:#f0f0f0;border-right:1px solid #696969;border-bottom:1px solid #696969;border-left:1px solid #e3e3e3;border-top:1px solid #e3e3e3;box-shadow:inset 1px 1px 0 #fff,inset -1px -1px 0 #a0a0a0"></div>
<svg style="left:9px;top:529px" width="5" height="9" viewBox="0 0 5 9"><path d="M4.5 0.5v8l-4-4z" fill="#000"/></svg>
<svg style="left:162px;top:529px" width="5" height="9" viewBox="0 0 5 9"><path d="M0.5 0.5v8l4-4z" fill="#000"/></svg>
<div class="ab" style="left:1px;top:543px;width:175px;height:23px;background:#f7f7f7"></div>
<div class="ab" style="left:1px;top:543px;width:175px;height:1px;background:#000"></div>
<div class="ab" style="left:4px;top:543px;width:64px;height:23px;background:#f0f0f0;border-right:1px solid #000;border-bottom:1px solid #000"></div>
<div class="t" style="left:25px;top:548px;font-size:11.8px">Project</div>
<div class="t" style="left:90px;top:548px;font-size:11.6px;color:#8c8c8c">Registers</div>
<div class="ab" style="left:142px;top:547px;width:1px;height:14px;background:#c8c8c8"></div>
<div class="ab" style="left:180px;top:116px;width:375px;height:451px;background:#f5f5f5;border:1px solid #a9a9a9"></div>
<svg style="left:181px;top:117px" width="373" height="26" viewBox="0 0 373 26"><path d="M3 22.5L25 2h68.5v21z" fill="#fdd77b"/><path d="M2.5 22.5L24.5 2.5h68.5" fill="none" stroke="#a0a0a0" stroke-width="1"/><path d="M4.5 22.5L25.2 3.5h67.3" fill="none" stroke="#fff" stroke-width="1" opacity="0.8"/><path d="M93.5 2.5v20" stroke="#a8a8a8" stroke-width="1.4"/><path d="M95 9l6-7h106.5l2.5 2.5v18.5h-115z" fill="#c2cca1"/><path d="M95 9.5l6.5-7h106l2.5 2.5v18" fill="none" stroke="#a0a0a0" stroke-width="1"/><path d="M96 22.5h113" stroke="#a0a0a0"/><path d="M209.5 4v19" stroke="#a8a8a8" stroke-width="1.6"/><path d="M0 22.5h373" stroke="#fdd77b" stroke-width="3"/><path d="M210 22.5h163" stroke="#b4b4b4" stroke-width="1"/></svg>
<div class="ab" style="left:181px;top:140px;width:373px;height:1px;background:#fdd77b"></div>
<svg style="left:209px;top:121px" width="12" height="16" viewBox="0 0 12 16"><path d="M0.5 0.5h8l3 3v12h-11z" fill="#eef2fb" stroke="#5570a8"/><path d="M8.5 0.5v3h3" fill="#fff" stroke="#5570a8" stroke-width="0.8"/></svg>
<div class="ab" style="left:211px;top:124px;width:6px;height:10px;background-image:repeating-conic-gradient(#c0c4cc 0 25%,#eef2fb 0 50%);background-size:2px 2px;clip-path:polygon(0 0,40% 0,100% 50%,40% 100%,0 100%)"></div>
<svg style="left:285px;top:121px" width="12" height="16" viewBox="0 0 12 16"><path d="M0.5 0.5h8l3 3v12h-11z" fill="#eef2fb" stroke="#5570a8"/><path d="M8.5 0.5v3h3" fill="#fff" stroke="#5570a8" stroke-width="0.8"/></svg>
<div class="ab" style="left:287px;top:124px;width:6px;height:10px;background-image:repeating-conic-gradient(#c0c4cc 0 25%,#eef2fb 0 50%);background-size:2px 2px;clip-path:polygon(0 0,40% 0,100% 50%,40% 100%,0 100%)"></div>
<div class="t" style="left:231px;top:123px;font-size:12.4px;font-weight:bold">main.c</div>
<div class="ab" style="left:227px;top:138px;width:43px;height:2px;background:#000"></div>
<div class="t" style="left:307px;top:123px;font-size:11.8px">components.c</div>
<svg style="left:519px;top:124px" width="8" height="8" viewBox="0 0 8 8"><path d="M0 0.5h7.5M0 1.5h7.5" stroke="#000"/><path d="M0 3h7.5l-3.75 4z" fill="#000"/></svg>
<svg style="left:538px;top:124px" width="9" height="8" viewBox="0 0 9 8"><path d="M0.8 0.5l7.4 7M8.2 0.5l-7.4 7" stroke="#000" stroke-width="1.8"/></svg>
<div class="ab" style="left:181px;top:141px;width:373px;height:425px;background:#fdd77b"></div>
<div class="ab" style="left:183px;top:141px;width:369px;height:423px;background:#fff;border-left:2px solid #6d6d6d;border-top:2px solid #6d6d6d"></div>
<div class="ab" style="left:183px;top:141px;width:1px;height:422px;background:#8a8a8a"></div>
<div class="ab" style="left:534px;top:143px;width:17px;height:402px;background:#f0f0f0"></div>
<div class="ab" style="left:534px;top:358px;width:15px;height:170px;background:#cdcdcd"></div>
<div class="ab" style="left:185px;top:545px;width:366px;height:18px;background:#f0f0f0"></div>
<div class="ab" style="left:202px;top:546px;width:42px;height:15px;background:#cdcdcd"></div>
<svg style="left:538px;top:148px" width="8" height="8" viewBox="0 0 8 8"><path d="M0.8 6L4 2.2 7.2 6" fill="none" stroke="#606060" stroke-width="2"/></svg>
<svg style="left:538px;top:532px" width="8" height="8" viewBox="0 0 8 8"><path d="M0.8 1.5L4 5.3 7.2 1.5" fill="none" stroke="#606060" stroke-width="2"/></svg>
<svg style="left:189px;top:550px" width="8" height="8" viewBox="0 0 8 8"><path d="M6 0.8L2.2 4 6 7.2" fill="none" stroke="#606060" stroke-width="2"/></svg>
<svg style="left:521px;top:550px" width="8" height="8" viewBox="0 0 8 8"><path d="M1.5 0.8L5.3 4 1.5 7.2" fill="none" stroke="#606060" stroke-width="2"/></svg>
<div class="ab" style="left:185px;top:143px;width:62px;height:402px;background:#e8e8e8"></div>
<div class="ab" style="left:247px;top:143px;width:15px;height:402px;background-image:repeating-conic-gradient(#e6e6e6 0 25%,#f8f8f8 0 50%);background-size:2px 2px"></div>
<div class="ab" style="left:185px;top:175px;width:20px;height:16px;background:#008000"></div>
<div class="ab" style="left:185px;top:191px;width:20px;height:16px;background:#008000"></div>
<div class="ab" style="left:185px;top:239px;width:20px;height:16px;background:#008000"></div>
<div class="ab" style="left:185px;top:287px;width:20px;height:16px;background:#008000"></div>
<div class="ab" style="left:185px;top:319px;width:20px;height:16px;background:#008000"></div>
<div class="ab" style="left:185px;top:351px;width:20px;height:16px;background:#008000"></div>
<div class="ab" style="left:185px;top:367px;width:20px;height:16px;background:#008000"></div>
<div class="ab" style="left:185px;top:383px;width:20px;height:16px;background:#008000"></div>
<div class="ab" style="left:185px;top:415px;width:20px;height:16px;background:#008000"></div>
<div class="ab" style="left:185px;top:431px;width:20px;height:16px;background:#008000"></div>
<div class="ab" style="left:185px;top:447px;width:20px;height:16px;background:#008000"></div>
<div class="ab" style="left:185px;top:479px;width:20px;height:16px;background:#c8c8c8"></div>
<div class="ab" style="left:185px;top:495px;width:20px;height:16px;background:#c8c8c8"></div>
<div class="ab" style="left:262px;top:143px;width:272px;height:402px;overflow:hidden">
<div class="m" style="left:0;top:1.5px"><span class="k">int</span> main(<span class="k">void</span>)</div>
<div class="m" style="left:0;top:17.5px">{</div>
<div class="m" style="left:0;top:33.5px">    <span class="k">return</span> <span class="n">0</span>;</div>
<div class="m" style="left:0;top:49.5px">}</div>
<div class="m" style="left:0;top:65.5px"></div>
<div class="m" style="left:0;top:81.5px"><span class="k">int</span> led(<span class="k">void</span>)</div>
<div class="m" style="left:0;top:97.5px">{</div>
<div class="m" style="left:0;top:113.5px">    rt_uint8_t count;</div>
<div class="m" style="left:0;top:129.5px"></div>
<div class="m" style="left:0;top:145.5px">    rt_pin_mode(LED_PIN, PIN_MODE_OUTPUT);</div>
<div class="m" style="left:0;top:161.5px"></div>
<div class="m" style="left:0;top:177.5px">    <span class="k">for</span>(count = <span class="n">0</span> ; count &lt; <span class="n">10</span> ;count++)</div>
<div class="m" style="left:0;top:193.5px">    {</div>
<div class="m" style="left:0;top:209.5px">        rt_pin_write(LED_PIN, PIN_HIGH);</div>
<div class="m" style="left:0;top:225.5px">        rt_kprintf(<span class="s">"led on, count : %d\r\n"</span>, count);</div>
<div class="m" style="left:0;top:241.5px">        rt_thread_mdelay(<span class="n">500</span>);</div>
<div class="m" style="left:0;top:257.5px"></div>
<div class="m" style="left:0;top:273.5px">        rt_pin_write(LED_PIN, PIN_LOW);</div>
<div class="m" style="left:0;top:289.5px">        rt_kprintf(<span class="s">"led off\r\n"</span>);</div>
<div class="m" style="left:0;top:305.5px">        rt_thread_mdelay(<span class="n">500</span>);</div>
<div class="m" style="left:0;top:321.5px">    }</div>
<div class="m" style="left:0;top:337.5px">    <span class="k">return</span> <span class="n">0</span>;</div>
<div class="m" style="left:0;top:353.5px">}</div>
<div class="m" style="left:0;top:369.5px">MSH_CMD_EXPORT(led, RT-Thread first led sample);</div>
<div class="m" style="left:0;top:385.5px"></div>
</div>
<div class="m" style="left:180px;top:144.5px;width:64px;text-align:right;color:#000">30</div>
<div class="m" style="left:180px;top:160.5px;width:64px;text-align:right;color:#000">31</div>
<div class="m" style="left:180px;top:176.5px;width:64px;text-align:right;color:#000">32</div>
<div class="m" style="left:180px;top:192.5px;width:64px;text-align:right;color:#000">33</div>
<div class="m" style="left:180px;top:208.5px;width:64px;text-align:right;color:#000">34</div>
<div class="m" style="left:180px;top:224.5px;width:64px;text-align:right;color:#000">35</div>
<div class="m" style="left:180px;top:240.5px;width:64px;text-align:right;color:#000">36</div>
<div class="m" style="left:180px;top:256.5px;width:64px;text-align:right;color:#000">37</div>
<div class="m" style="left:180px;top:272.5px;width:64px;text-align:right;color:#000">38</div>
<div class="m" style="left:180px;top:288.5px;width:64px;text-align:right;color:#000">39</div>
<div class="m" style="left:180px;top:304.5px;width:64px;text-align:right;color:#000">40</div>
<div class="m" style="left:180px;top:320.5px;width:64px;text-align:right;color:#000">41</div>
<div class="m" style="left:180px;top:336.5px;width:64px;text-align:right;color:#000">42</div>
<div class="m" style="left:180px;top:352.5px;width:64px;text-align:right;color:#000">43</div>
<div class="m" style="left:180px;top:368.5px;width:64px;text-align:right;color:#000">44</div>
<div class="m" style="left:180px;top:384.5px;width:64px;text-align:right;color:#000">45</div>
<div class="m" style="left:180px;top:400.5px;width:64px;text-align:right;color:#000">46</div>
<div class="m" style="left:180px;top:416.5px;width:64px;text-align:right;color:#000">47</div>
<div class="m" style="left:180px;top:432.5px;width:64px;text-align:right;color:#000">48</div>
<div class="m" style="left:180px;top:448.5px;width:64px;text-align:right;color:#000">49</div>
<div class="m" style="left:180px;top:464.5px;width:64px;text-align:right;color:#000">50</div>
<div class="m" style="left:180px;top:480.5px;width:64px;text-align:right;color:#000">51</div>
<div class="m" style="left:180px;top:496.5px;width:64px;text-align:right;color:#000">52</div>
<div class="m" style="left:180px;top:512.5px;width:64px;text-align:right;color:#000">53</div>
<div class="m" style="left:180px;top:528.5px;width:64px;text-align:right;color:#000">54</div>
<div class="ab" style="left:254px;top:173px;width:1px;height:43px;background:#808080"></div>
<div class="ab" style="left:254px;top:215px;width:6px;height:1px;background:#808080"></div>
<div class="ab" style="left:254px;top:253px;width:1px;height:251px;background:#808080"></div>
<div class="ab" style="left:254px;top:503px;width:6px;height:1px;background:#808080"></div>
<div class="ab" style="left:254px;top:471px;width:6px;height:1px;background:#808080"></div>
<div class="ab" style="left:249px;top:162px;width:11px;height:11px;background:#fff;border:1px solid #808080"></div>
<div class="ab" style="left:251px;top:167px;width:7px;height:1px;background:#808080"></div>
<div class="ab" style="left:249px;top:242px;width:11px;height:11px;background:#fff;border:1px solid #808080"></div>
<div class="ab" style="left:251px;top:247px;width:7px;height:1px;background:#808080"></div>
<div class="ab" style="left:249px;top:338px;width:11px;height:11px;background:#fff;border:1px solid #808080"></div>
<div class="ab" style="left:251px;top:343px;width:7px;height:1px;background:#808080"></div>
<div class="ab" style="left:559px;top:116px;width:358px;height:18px;background:linear-gradient(#bdcbdb,#d8e3ef)"></div>
<div class="t" style="left:563px;top:120px;font-size:12px;letter-spacing:-0.7px">UART #1</div>
<svg style="left:884px;top:120px" width="9" height="10" viewBox="0 0 9 10"><path d="M2.5 1.5h4v5h-4z" fill="none" stroke="#000" stroke-width="1.2"/><path d="M1 6.5h7" stroke="#000" stroke-width="1.4"/><path d="M4.5 7v3" stroke="#000" stroke-width="1.2"/></svg>
<div class="ab" style="left:901px;top:120px;width:12px;height:12px;background:#c94f4f"></div>
<svg style="left:901px;top:120px" width="12" height="12" viewBox="0 0 12 12"><path d="M3.5 3.5l5 5M8.5 3.5l-5 5" stroke="#fff" stroke-width="1.8"/></svg>
<div class="ab" style="left:559px;top:136px;width:358px;height:430px;background:#fff;border-left:2px solid #6d6d6d;border-top:2px solid #6d6d6d"></div>
<div class="ab" style="left:899px;top:138px;width:17px;height:411px;background:#f0f0f0"></div>
<div class="ab" style="left:900px;top:169px;width:15px;height:363px;background:#cdcdcd"></div>
<div class="ab" style="left:561px;top:549px;width:356px;height:17px;background:#f0f0f0"></div>
<svg style="left:903px;top:143px" width="8" height="8" viewBox="0 0 8 8"><path d="M0.8 6L4 2.2 7.2 6" fill="none" stroke="#606060" stroke-width="2"/></svg>
<svg style="left:903px;top:536px" width="8" height="8" viewBox="0 0 8 8"><path d="M0.8 1.5L4 5.3 7.2 1.5" fill="none" stroke="#606060" stroke-width="2"/></svg>
<svg style="left:565px;top:553px" width="8" height="8" viewBox="0 0 8 8"><path d="M6 0.8L2.2 4 6 7.2" fill="none" stroke="#c0c0c0" stroke-width="2"/></svg>
<svg style="left:886px;top:553px" width="8" height="8" viewBox="0 0 8 8"><path d="M1.5 0.8L5.3 4 1.5 7.2" fill="none" stroke="#c0c0c0" stroke-width="2"/></svg>
<div class="ab" style="left:561px;top:139px;width:338px;height:411px;overflow:hidden">
<div class="m" style="left:0;top:0.5px"> \ | /</div>
<div class="m" style="left:0;top:16.5px">- RT -     Thread Operating System</div>
<div class="m" style="left:0;top:32.5px"> / | \     3.1.0 build Sep 15 2018</div>
<div class="m" style="left:0;top:48.5px"> 2006 - 2018 Copyright by rt-thread team</div>
<div class="m" style="left:0;top:64.5px">msh &gt;led</div>
<div class="m" style="left:0;top:80.5px">led on, count : 0</div>
<div class="m" style="left:0;top:96.5px">led off</div>
<div class="m" style="left:0;top:112.5px">led on, count : 1</div>
<div class="m" style="left:0;top:128.5px">led off</div>
<div class="m" style="left:0;top:144.5px">led on, count : 2</div>
<div class="m" style="left:0;top:160.5px">led off</div>
<div class="m" style="left:0;top:176.5px">led on, count : 3</div>
<div class="m" style="left:0;top:192.5px">led off</div>
<div class="m" style="left:0;top:208.5px">led on, count : 4</div>
<div class="m" style="left:0;top:224.5px">led off</div>
<div class="m" style="left:0;top:240.5px">led on, count : 5</div>
<div class="m" style="left:0;top:256.5px">led off</div>
<div class="m" style="left:0;top:272.5px">led on, count : 6</div>
<div class="m" style="left:0;top:288.5px">led off</div>
<div class="m" style="left:0;top:304.5px">led on, count : 7</div>
<div class="m" style="left:0;top:320.5px">led off</div>
<div class="m" style="left:0;top:336.5px">led on, count : 8</div>
<div class="m" style="left:0;top:352.5px">led off</div>
<div class="m" style="left:0;top:368.5px">led on, count : 9</div>
</div>
<div class="ab" style="left:5px;top:569px;width:142px;height:20px;background:#f0f0f0;border:1px solid #c8c8c8;border-bottom:none"></div>
<div class="t" style="left:33px;top:574px;font-size:11.8px;letter-spacing:-0.45px;color:#6d6d6d">Call Stack + Locals</div>
<div class="ab" style="left:146px;top:569px;width:23px;height:20px;background:#f0f0f0;border:1px solid #c8c8c8;border-bottom:none"></div>
<div class="ab" style="left:183px;top:569px;width:100px;height:20px;background:#f0f0f0;border:1px solid #c8c8c8;border-bottom:none"></div>
<div class="t" style="left:211px;top:574px;font-size:12px;color:#6d6d6d">Command</div>
<svg style="left:8px;top:547px" width="14" height="13" viewBox="0 0 14 13"><rect x="0.5" y="0.5" width="13" height="12" fill="#eef2fc" stroke="#2a3e6a"/><rect x="1" y="1" width="12" height="3" fill="#4a82e8"/><rect x="2" y="5" width="1" height="6" fill="#404040"/><rect x="3" y="5" width="2" height="1" fill="#b8d800"/><rect x="3" y="7" width="9" height="1" fill="#b8d800"/><rect x="3" y="9" width="9" height="1" fill="#b8d800"/><rect x="3" y="11" width="9" height="1" fill="#b8d800"/><rect x="5" y="7" width="1" height="5" fill="#505050"/></svg>
<svg style="left:74px;top:548px" width="13" height="11" viewBox="0 0 13 11"><rect x="0.5" y="0.5" width="12" height="2.6" rx="0.8" fill="#2a4070"/><rect x="0.5" y="4.2" width="12" height="2.6" rx="0.8" fill="#2a4070"/><rect x="0.5" y="7.9" width="12" height="2.6" rx="0.8" fill="#2a4070"/><path d="M2 1.8h9M2 5.5h9M2 9.2h9" stroke="#d8dce8" stroke-dasharray="2 1"/></svg>
<svg style="left:8px;top:573px" width="16" height="15" viewBox="0 0 16 15"><rect x="2.5" y="0.5" width="7" height="6" fill="#fafcff" stroke="#304060"/><rect x="5.5" y="3.5" width="7" height="6" fill="#fafcff" stroke="#304060"/><rect x="8.5" y="6.5" width="7" height="6" fill="#fafcff" stroke="#304060"/><path d="M2 7c-2 2-1 5 2 6" fill="none" stroke="#3a6ad8" stroke-width="1.5"/><path d="M2 10l4 3-3 2z" fill="#1a4ac8"/></svg>
<svg style="left:150px;top:573px" width="14" height="13" viewBox="0 0 14 13"><rect x="0.5" y="0.5" width="13" height="12" fill="#eef2fc" stroke="#2a3e6a"/><rect x="1" y="1" width="12" height="3" fill="#4a82e8"/><rect x="2" y="5" width="1" height="1" fill="#505050"/><rect x="4" y="5" width="1" height="1" fill="#505050"/><rect x="6" y="5" width="1" height="1" fill="#505050"/><rect x="8" y="5" width="1" height="1" fill="#505050"/><rect x="10" y="5" width="1" height="1" fill="#505050"/><rect x="2" y="7" width="1" height="1" fill="#505050"/><rect x="4" y="7" width="1" height="1" fill="#505050"/><rect x="6" y="7" width="1" height="1" fill="#505050"/><rect x="8" y="7" width="1" height="1" fill="#505050"/><rect x="10" y="7" width="1" height="1" fill="#505050"/><rect x="2" y="9" width="1" height="1" fill="#505050"/><rect x="4" y="9" width="1" height="1" fill="#505050"/><rect x="6" y="9" width="1" height="1" fill="#505050"/><rect x="8" y="9" width="1" height="1" fill="#505050"/><rect x="10" y="9" width="1" height="1" fill="#505050"/><rect x="2" y="11" width="1" height="1" fill="#505050"/><rect x="4" y="11" width="1" height="1" fill="#505050"/><rect x="6" y="11" width="1" height="1" fill="#505050"/><rect x="8" y="11" width="1" height="1" fill="#505050"/><rect x="10" y="11" width="1" height="1" fill="#505050"/></svg>
<svg style="left:187px;top:573px" width="14" height="13" viewBox="0 0 14 13"><rect x="0.5" y="0.5" width="13" height="12" fill="#eef2fc" stroke="#2a3e6a"/><rect x="1" y="1" width="12" height="3" fill="#4a82e8"/><path d="M3 6l3 2.5-3 2.5" fill="none" stroke="#000" stroke-width="1.2"/></svg>
<div class="ab" style="left:1px;top:589px;width:916px;height:19px;background:#f0f0f0;border-top:1px solid #d7d7d7"></div>
<div class="ab" style="left:753px;top:590px;width:1px;height:18px;background:#d7d7d7"></div>
<div class="t" style="left:757px;top:594px;font-size:12.4px">Simulation</div>
<div class="ab" style="left:899px;top:590px;width:1px;height:18px;background:#d7d7d7"></div>
<div class="ab" style="left:912px;top:598px;width:2px;height:2px;background:#b0b0b0"></div>
<div class="ab" style="left:909px;top:601px;width:2px;height:2px;background:#b0b0b0"></div>
<div class="ab" style="left:912px;top:601px;width:2px;height:2px;background:#b0b0b0"></div>
<div class="ab" style="left:906px;top:604px;width:2px;height:2px;background:#b0b0b0"></div>
<div class="ab" style="left:909px;top:604px;width:2px;height:2px;background:#b0b0b0"></div>
<div class="ab" style="left:912px;top:604px;width:2px;height:2px;background:#b0b0b0"></div>
<div class="ab" style="left:0px;top:0px;width:918px;height:609px;border:1px solid #1a7fd9;pointer-events:none"></div>
</body></html>
